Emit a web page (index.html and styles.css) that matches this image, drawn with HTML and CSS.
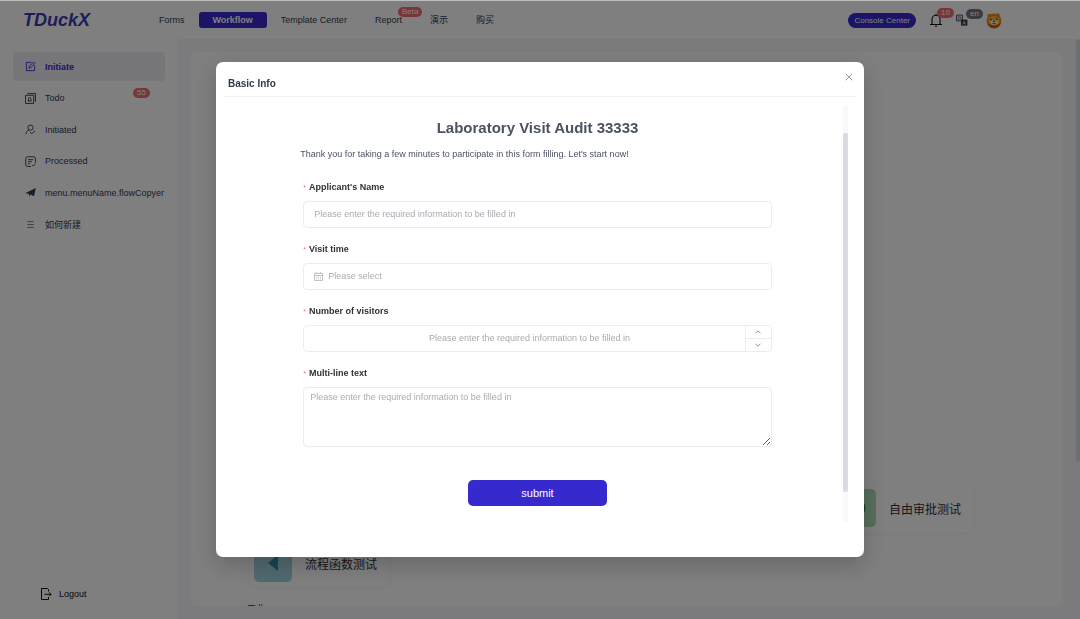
FILE: index.html
```html
<!DOCTYPE html>
<html lang="en">
<head>
    <meta charset="UTF-8">
    <meta name="viewport" content="width=device-width, initial-scale=1.0">
    <title>TDuckX</title>
    <link rel="stylesheet" href="styles.css">
</head>
<body>
<div class="app">
    <header class="header">
        <a class="logo" href="#">TDuckX</a>
        <nav class="nav">
            <a href="#">Forms</a>
            <a href="#" class="active">Workflow</a>
            <a href="#">Template Center</a>
            <a href="#" class="has-badge">Report<span class="badge badge-beta">Beta</span></a>
            <a href="#">演示</a>
            <a href="#">购买</a>
        </nav>
        <div class="tools">
            <button type="button" class="console-btn">Console Center</button>
            <button type="button" class="tool bell" aria-label="Messages">
                <svg width="14" height="14" viewBox="0 0 14 14" fill="none" stroke="#111" stroke-width="1.1">
                    <path d="M1 11.5h12M3 11.5V6.3a4 4 0 0 1 8 0v5.2M7 2.3V.8M6 13.3h2"/>
                </svg>
                <span class="badge">10</span>
            </button>
            <button type="button" class="tool lang" aria-label="Language">
                <svg width="12" height="12" viewBox="0 0 12 12">
                    <path d="M.6 1.1h5.8v5.8H.6z" fill="none" stroke="#303a4d" stroke-width=".9"/>
                    <path d="M2.2 2.8h2.6v2.4H2.2z" fill="none" stroke="#303a4d" stroke-width=".6"/>
                    <path d="M5 5.6h6.4v6H5z" fill="#303a4d"/>
                    <path d="M6.9 10.4l1.3-3.2 1.3 3.2M7.4 9.4h1.6" fill="none" stroke="#fff" stroke-width=".6"/>
                </svg>
                <span class="badge badge-gray">en</span>
            </button>
            <button type="button" class="tool avatar" aria-label="Account">
                <svg width="16" height="17" viewBox="0 0 16 17">
                    <circle cx="3.4" cy="3.6" r="1.9" fill="#e88a20"/>
                    <circle cx="12" cy="3" r="1.8" fill="#e88a20"/>
                    <circle cx="8" cy="8.8" r="7.4" fill="#f08a20"/>
                    <path d="M2 7Q8 .8 14 7L13 11.4Q8 14.4 3 11.4z" fill="#ffb636"/>
                    <path d="M1.2 11Q8 16.6 14.8 11Q13 16.4 8 16.4T1.2 11z" fill="#dd4f1e"/>
                    <path d="M4 9.4Q8 7.2 12.4 9.2Q12 12.8 8.2 12.8T4 9.4z" fill="#fff3d8"/>
                    <path d="M3.8 7.6l2.2-.6M10 6.8l2 .6M7.4 9.2h1.6l-.8.8zM6.4 11.2q1.8 1 3.4 0" fill="none" stroke="#4a2410" stroke-width=".8"/>
                </svg>
            </button>
        </div>
    </header>

    <aside class="sidebar">
        <nav class="menu">
            <a href="#" class="active">
                <svg viewBox="0 0 12 12"><path d="M7 1.5H1.5v9h9V5M4.2 7.8l.4-1.9 4.8-4.8 1.5 1.5-4.8 4.8z"/></svg>
                Initiate
            </a>
            <a href="#">
                <svg viewBox="0 0 12 12"><path d="M.6 2.5h8.9v8.9H.6zM2.5.6h8.9v8.9M3.2 8.8h3.8M3.8 8.8V6.2a1.3 1.3 0 0 1 2.6 0v2.6"/></svg>
                Todo
                <span class="badge badge-menu">55</span>
            </a>
            <a href="#">
                <svg viewBox="0 0 12 12"><path d="M1.2 11c0-2.6 1.3-4 3.2-4.4M6 1.2a2.8 2.8 0 1 1 0 5.6 2.8 2.8 0 0 1 0-5.6M5.4 8.6l2 2 3.6-3.2"/></svg>
                Initiated
            </a>
            <a href="#">
                <svg viewBox="0 0 12 12"><path d="M6.5 11.4H3a2.2 2.2 0 0 1-2.2-2.2V3A2.2 2.2 0 0 1 3 .8h6.2A2.2 2.2 0 0 1 11.4 3v4.5M3.3 4h5.6M3.3 6.2h4.2M3.3 8.4h2M7.8 9.8L9 11l2.4-2.6"/></svg>
                Processed
            </a>
            <a href="#">
                <svg viewBox="0 0 12 12"><path class="solid" d="M.1 6.8L11.8 1 9.8 10.2 6 8.2 4.5 10.4 4.2 7.4z"/></svg>
                menu.menuName.flowCopyer
            </a>
            <a href="#">
                <svg viewBox="0 0 12 12"><path class="thin" d="M2.5 2.8h7M2.5 6h7M2.5 9.2h7"/></svg>
                如何新建
            </a>
        </nav>
        <button type="button" class="logout">
            <svg width="12" height="12" viewBox="0 0 12 12" fill="none" stroke="#111"><path d="M8.5 3.5v-2l-1-1h-6v11h7v-2.5M4.5 6.3h6.5M9.2 4.3l2 2-2 2"/></svg>
            Logout
        </button>
    </aside>

    <main class="main">
        <section class="panel">
            <div class="cards">
                <a href="#" class="card card-last">
                    <span class="card-icon green">
                        <svg width="18" height="18" viewBox="0 0 18 18"><circle cx="9" cy="9" r="8.5" fill="#1e8e3a"/></svg>
                    </span>
                    自由审批测试
                </a>
                <a href="#" class="card card-first">
                    <span class="card-icon blue">
                        <svg width="18" height="18" viewBox="0 0 18 18"><path d="M4 9l10-8v16z" fill="#2f8fa3"/></svg>
                    </span>
                    流程函数测试
                </a>
            </div>
            <h2 class="group-title">工业</h2>
        </section>
        <div class="page-scroll"></div>
    </main>
</div>

<div class="overlay">
    <div class="dialog" role="dialog" aria-labelledby="dialog-title">
        <div class="dialog-header">
            <h2 id="dialog-title">Basic Info</h2>
            <button type="button" class="close" aria-label="Close">
                <svg width="8" height="8" viewBox="0 0 8 8" fill="none" stroke="#909399" stroke-width=".9"><path d="M.7.7l6.6 6.6M7.3.7L.7 7.3"/></svg>
            </button>
        </div>
        <div class="dialog-body">
            <form class="form">
                <h1>Laboratory Visit Audit 33333</h1>
                <p class="desc">Thank you for taking a few minutes to participate in this form filling. Let's start now!</p>

                <div class="item">
                    <label for="name">Applicant's Name</label>
                    <div class="field">
                        <input type="text" id="name" placeholder="Please enter the required information to be filled in">
                    </div>
                </div>

                <div class="item">
                    <label for="time">Visit time</label>
                    <div class="field">
                        <svg class="calendar" width="9" height="9" viewBox="0 0 9 9" fill="none" stroke="#a8abb2" stroke-width=".7"><path d="M.5 1.3h8v7.2h-8zM.5 3.5h8M2.5.2v1.6M6.5.2v1.6M2 5.2h1M4 5.2h1M6 5.2h1M2 6.9h1M4 6.9h1M6 6.9h1"/></svg>
                        <input type="text" id="time" placeholder="Please select">
                    </div>
                </div>

                <div class="item">
                    <label for="visitors">Number of visitors</label>
                    <div class="field number">
                        <input type="text" inputmode="numeric" id="visitors" placeholder="Please enter the required information to be filled in">
                        <div class="steps">
                            <button type="button" aria-label="Increase">
                                <svg width="6" height="4" viewBox="0 0 6 4"><path d="M.5 3.3L3 .8l2.5 2.5"/></svg>
                            </button>
                            <button type="button" aria-label="Decrease">
                                <svg width="6" height="4" viewBox="0 0 6 4"><path d="M.5.7L3 3.2 5.5.7"/></svg>
                            </button>
                        </div>
                    </div>
                </div>

                <div class="item">
                    <label for="remark">Multi-line text</label>
                    <textarea id="remark" placeholder="Please enter the required information to be filled in"></textarea>
                </div>

                <button type="submit" class="submit">submit</button>
            </form>
            <div class="scroll-track">
                <div class="scroll-thumb"></div>
            </div>
        </div>
    </div>
</div>
</body>
</html>
```
FILE: styles.css
```css
* {
    box-sizing: border-box;
}
body {
    margin: 0;
    font-family: "Liberation Sans", Arial, "Noto Sans CJK SC", sans-serif;
    font-size: 9px;
    color: #303a4d;
    background-color: #fff;
}
a {
    color: inherit;
    text-decoration: none;
}
button {
    padding: 0;
    border: none;
    background: none;
    font-family: inherit;
    font-size: inherit;
    color: inherit;
    cursor: pointer;
}
h1, h2, p {
    margin: 0;
}
.app {
    display: grid;
    grid-template-columns: 178px 1fr;
    grid-template-rows: 39px 1fr;
    height: 100vh;
    overflow: hidden;
}

/* header */
.header {
    grid-column: 1 / 3;
    display: flex;
    align-items: center;
    padding: 1px 78px 0 23px;
}
.logo {
    width: 122px;
    font-size: 18px;
    font-weight: bold;
    font-style: italic;
    color: #4038b8;
}
.nav {
    display: flex;
    flex: 1;
}
.nav a {
    padding: 0 14px;
    line-height: 16px;
    border-radius: 3px;
}
.nav .active {
    background-color: #3629ce;
    color: #fff;
    font-weight: bold;
}
.has-badge, .tool {
    position: relative;
}
.badge {
    padding: 0 4px;
    line-height: 10px;
    border-radius: 5px;
    background-color: #f56c6c;
    color: #fff;
    font-size: 8px;
    font-weight: normal;
}
.nav .badge, .tool .badge {
    position: absolute;
}
.nav .badge-beta {
    top: -5px;
    left: 37px;
}
.tools {
    display: flex;
    align-items: center;
}
.tools svg {
    display: block;
}
.console-btn {
    padding: 0 6px;
    margin-right: 13px;
    line-height: 15px;
    border-radius: 8px;
    background-color: #3629ce;
    color: #fff;
    font-size: 8px;
}
.tool .badge {
    top: -5px;
    left: 8px;
}
.bell {
    margin-right: 13px;
}
.lang {
    margin-right: 18px;
}
.tool .badge-gray {
    background-color: #73767a;
    left: 10px;
}

/* sidebar */
.sidebar {
    display: flex;
    flex-direction: column;
    padding: 13px;
}
.menu {
    display: flex;
    flex-direction: column;
    justify-content: space-between;
    height: 187px;
}
.menu a {
    display: flex;
    align-items: center;
    height: 29px;
    padding-left: 12px;
    border-radius: 3px;
    white-space: nowrap;
}
.menu .active {
    background-color: #eeeef4;
    color: #3629ce;
    font-weight: bold;
}
.menu svg {
    flex: none;
    width: 11px;
    height: 11px;
    margin-right: 9px;
    fill: none;
    stroke: currentColor;
}
.menu .solid {
    fill: currentColor;
    stroke: none;
}
.menu .thin {
    stroke-width: 0.7;
}
.badge-menu {
    margin: 0 15px 10px auto;
}
.logout {
    display: flex;
    align-items: center;
    gap: 7px;
    margin: auto 0 6px 27px;
    color: #111;
}

/* content */
.main {
    position: relative;
    padding: 13px 17px 13px 13px;
    background-color: #f6f6fa;
}
.panel {
    display: flex;
    flex-direction: column;
    justify-content: flex-end;
    height: 100%;
    padding: 0 56px;
    border-radius: 6px;
    background-color: #fff;
    overflow: hidden;
}
.cards {
    display: grid;
    grid-template-columns: repeat(auto-fill, 140px);
    gap: 7px 6px;
    margin: 0 2px 16px;
}
.card {
    display: flex;
    align-items: center;
    gap: 13px;
    height: 48px;
    padding: 0 5px;
    border-radius: 5px;
    box-shadow: 0 1px 5px rgba(0, 0, 0, 0.05);
    font-size: 12px;
    color: #303133;
    white-space: nowrap;
}
.card-last {
    grid-column: 5;
}
.card-first {
    grid-column: 1;
}
.card-icon {
    display: flex;
    flex: none;
    align-items: center;
    justify-content: center;
    width: 38px;
    height: 38px;
    border-radius: 5px;
}
.green {
    background-color: #b0dcb6;
}
.blue {
    background-color: #a0d4e0;
}
.group-title {
    height: 3px;
    font-size: 9px;
    line-height: 12px;
    font-weight: normal;
    color: #303133;
}
.page-scroll {
    position: absolute;
    top: 0;
    right: 0;
    width: 4px;
    height: 73%;
    border-radius: 2px;
    background-color: #dddee0;
}

/* dialog */
.overlay {
    position: fixed;
    inset: 0;
    border-top: 1px solid rgba(0, 0, 0, 0.25);
    background-color: rgba(0, 0, 0, 0.5);
    background-clip: padding-box;
}
.dialog {
    display: flex;
    flex-direction: column;
    width: 60%;
    height: 80vh;
    margin: calc(10vh - 1px) auto 0;
    border-radius: 7px;
    background-color: #fff;
    box-shadow: 0 8px 24px rgba(0, 0, 0, 0.2);
}
.dialog-header {
    display: flex;
    justify-content: space-between;
    height: 35px;
    margin: 0 8px;
    padding: 0 3px 0 4px;
    border-bottom: 1px solid #f2f3f5;
}
.dialog-header h2 {
    padding-top: 14px;
    font-size: 10px;
    line-height: 16px;
}
.close {
    align-self: flex-start;
    padding-top: 11px;
}
.dialog-body {
    display: flex;
    flex: 1;
    margin: 8px 16px 35px;
}
.form {
    display: flex;
    flex-direction: column;
    width: 78%;
    margin: 0 auto;
}
.form h1 {
    margin-top: 12px;
    font-size: 15px;
    line-height: 22px;
    text-align: center;
    color: #4b5262;
}
.desc {
    margin: 8px 3px 17px;
    line-height: 14px;
    color: #4b5262;
}
.item {
    margin: 0 6px 12px;
}
.item label {
    display: block;
    height: 18px;
    margin-bottom: 5px;
    line-height: 18px;
    font-weight: bold;
    color: #303133;
}
.item label::before {
    content: "*";
    margin-right: 3px;
    font-size: 7px;
    line-height: 1;
    font-weight: normal;
    color: #f56c6c;
}
.field {
    display: flex;
    align-items: center;
    height: 27px;
    padding-left: 10px;
    border: 1px solid #ebedf0;
    border-radius: 4px;
    overflow: hidden;
}
.field input, textarea {
    font-family: inherit;
    font-size: 9px;
    color: #606266;
}
.field input {
    flex: 1;
    min-width: 0;
    padding: 0;
    border: none;
    outline: none;
    background: none;
}
::placeholder {
    color: #a8abb2;
}
.calendar {
    margin-right: 5px;
}
.number input {
    text-align: center;
}
.steps {
    display: flex;
    flex-direction: column;
    width: 26px;
    height: 100%;
    border-left: 1px solid #ebedf0;
}
.steps button {
    display: flex;
    flex: 1;
    align-items: center;
    justify-content: center;
}
.steps button + button {
    border-top: 1px solid #ebedf0;
}
.steps path {
    fill: none;
    stroke: #73767a;
    stroke-width: 0.8;
}
textarea {
    display: block;
    width: 100%;
    height: 60px;
    padding: 4px 6px;
    border: 1px solid #ebedf0;
    border-radius: 4px;
    outline: none;
    resize: vertical;
}
.submit {
    align-self: center;
    width: 29%;
    margin-top: 21px;
    line-height: 26px;
    border-radius: 5px;
    background-color: #3629ce;
    color: #fff;
    font-size: 11px;
}
.scroll-track {
    width: 5px;
    background-color: #f8f9fc;
}
.scroll-thumb {
    height: 86%;
    margin-top: 28px;
    border-radius: 2px;
    background-color: #dadce2;
}
```
